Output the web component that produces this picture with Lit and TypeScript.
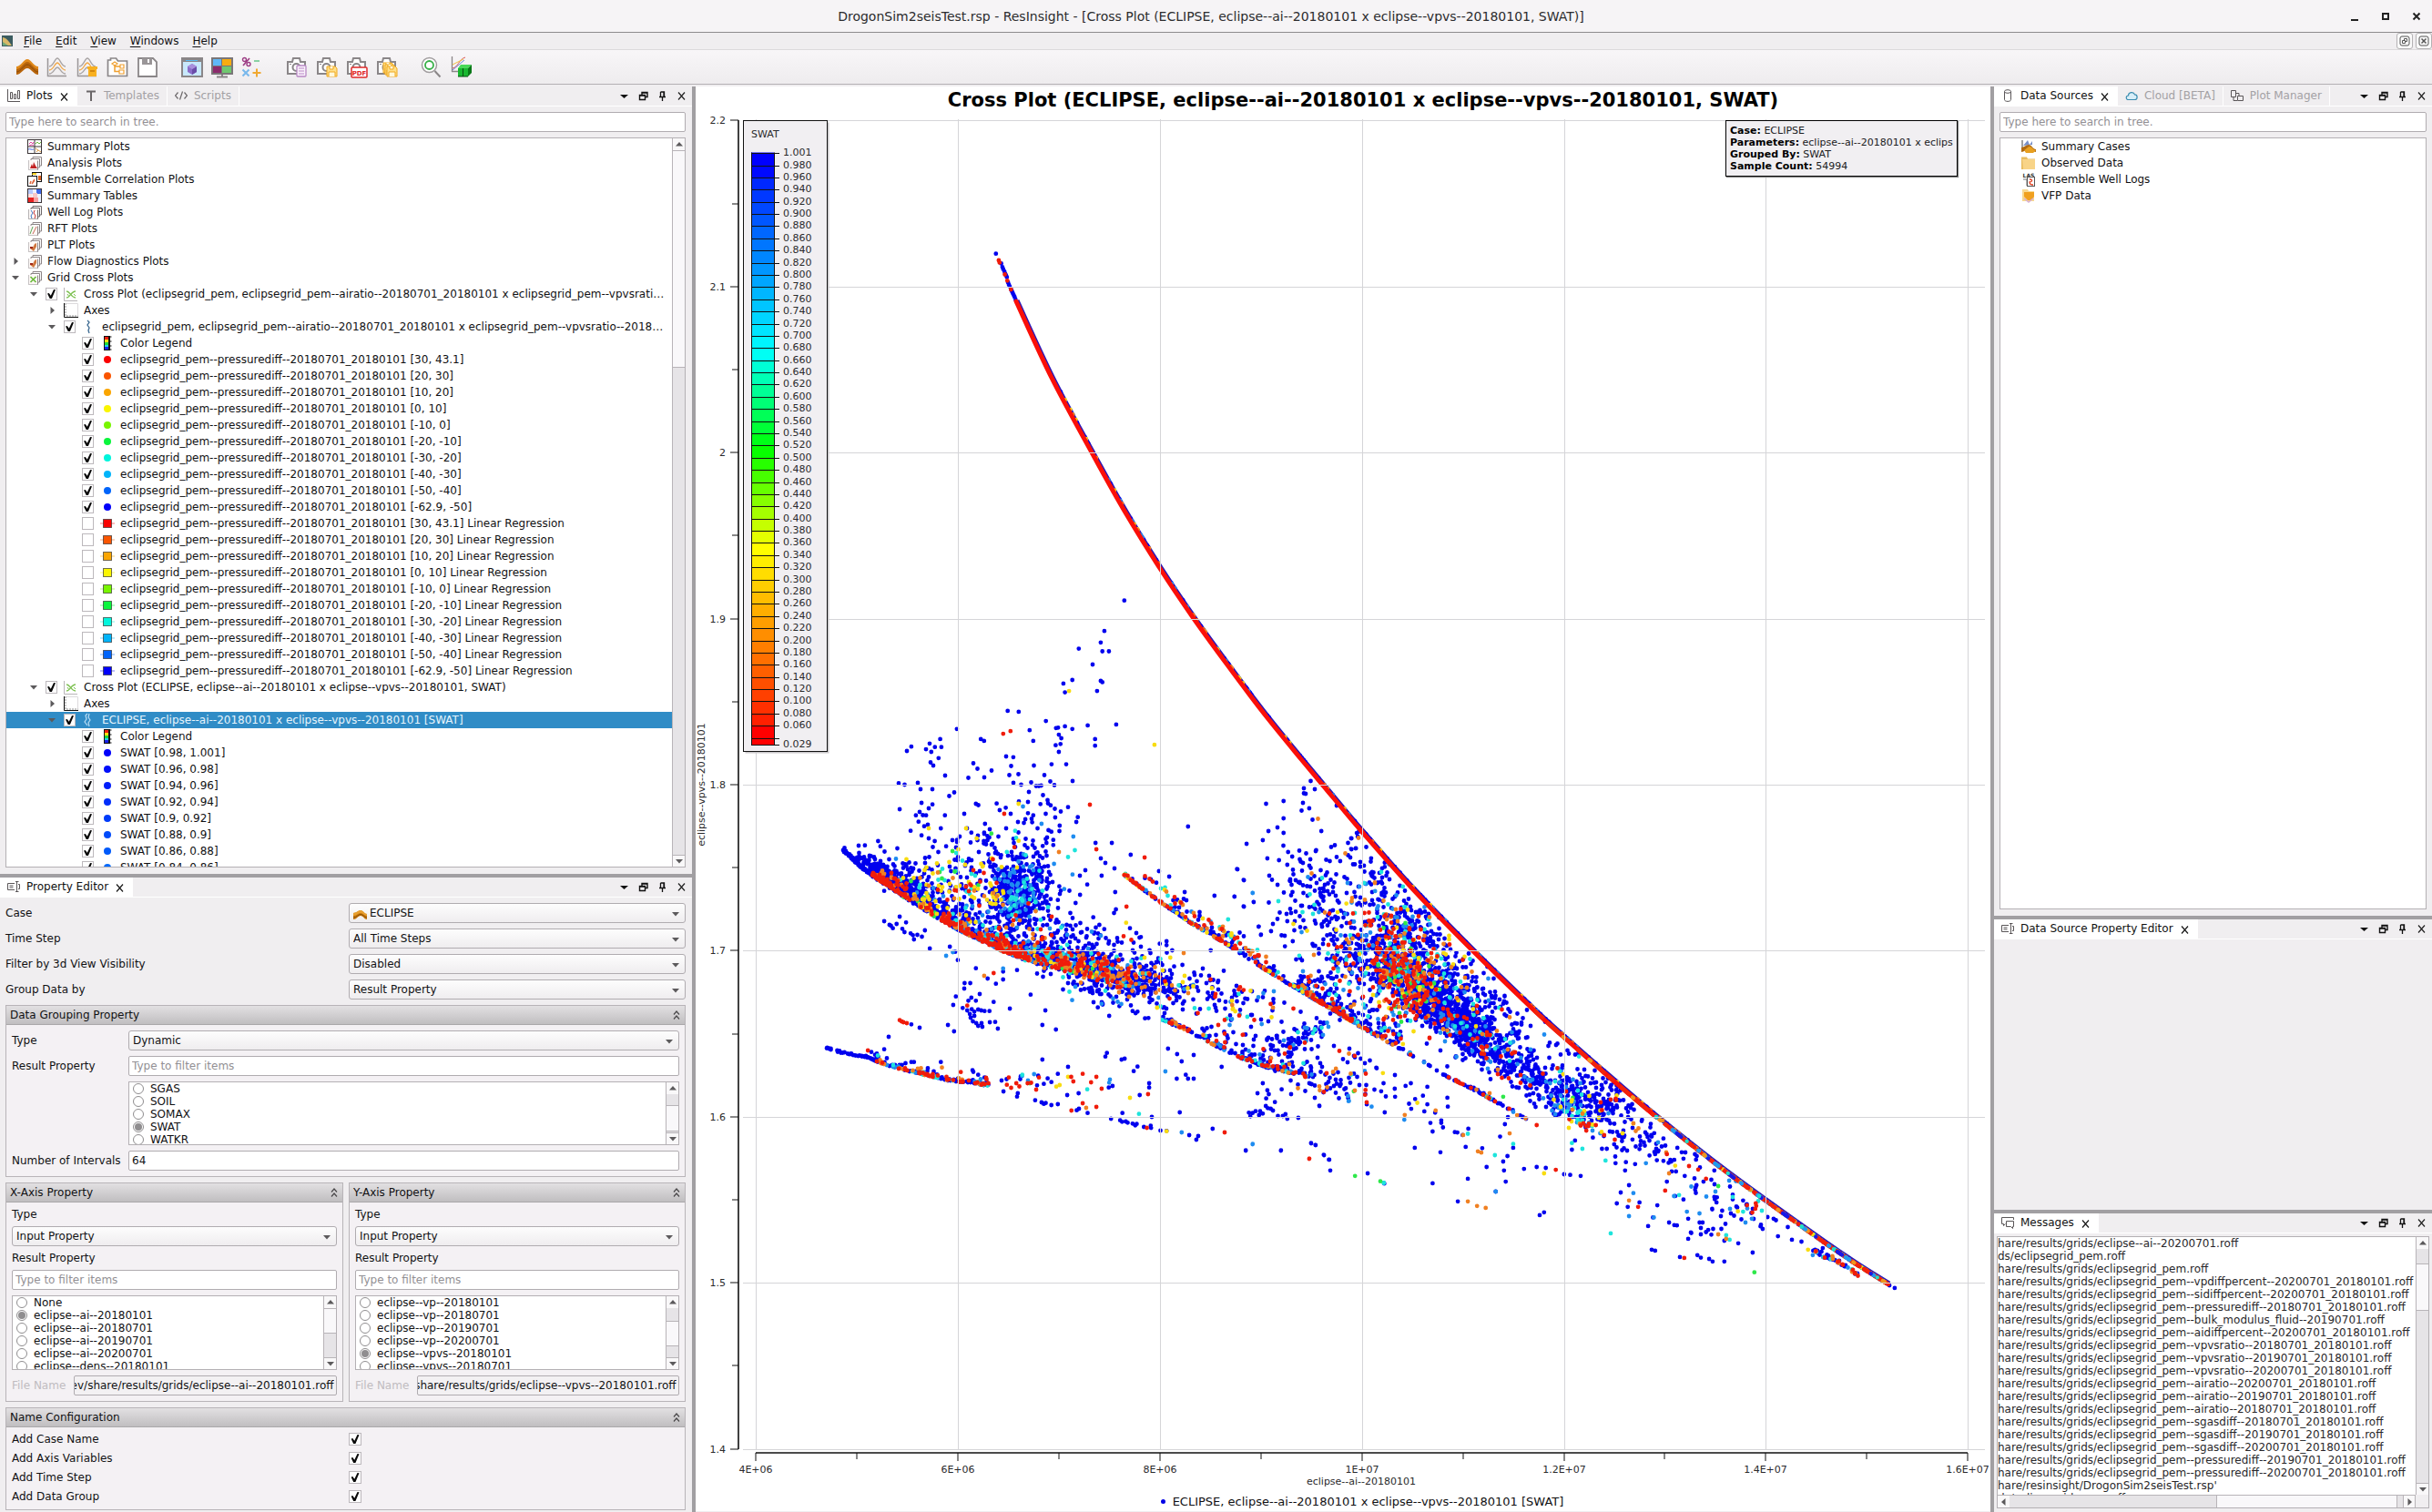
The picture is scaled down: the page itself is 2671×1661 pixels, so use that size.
import { LitElement, html, svg, css, nothing, TemplateResult, SVGTemplateResult } from "lit";
import { customElement } from "lit/decorators.js";

/* ------------------------------------------------------------------ */
/* Colour scale                                                        */
/* ------------------------------------------------------------------ */

const STOPS: number[][] = [
  [255, 0, 0],
  [255, 127, 0],
  [255, 255, 0],
  [0, 255, 0],
  [0, 255, 255],
  [0, 127, 255],
  [0, 0, 255],
];

function rainbow(t: number): string {
  const p = Math.min(Math.max(t, 0), 1) * (STOPS.length - 1);
  const i = Math.min(Math.floor(p), STOPS.length - 2);
  const f = p - i;
  const c = STOPS[i].map((v, k) => Math.round(v + (STOPS[i + 1][k] - v) * f));
  return `rgb(${c.join(",")})`;
}

/* ------------------------------------------------------------------ */
/* Scatter data                                                        */
/* ------------------------------------------------------------------ */

type Key = "b" | "l" | "c" | "g" | "y" | "o" | "r";
type Pt = [number, number];

const POINT_COLORS: Record<Key, string> = {
  b: "#0000ee",
  l: "#1e8cf0",
  c: "#1ee4dc",
  g: "#2ee84a",
  y: "#f8dc10",
  o: "#f08022",
  r: "#f01c0a",
};
const DRAW_ORDER: Key[] = ["b", "l", "c", "g", "y", "o", "r"];

function mulberry(seed: number): () => number {
  let a = seed;
  return () => {
    a = (a + 0x6d2b79f5) | 0;
    let t = Math.imul(a ^ (a >>> 15), 1 | a);
    t = (t + Math.imul(t ^ (t >>> 7), 61 | t)) ^ t;
    return ((t ^ (t >>> 14)) >>> 0) / 4294967296;
  };
}

const MAIN: Pt[] = [
  [1094, 279], [1116, 331], [1155, 415], [1199, 497], [1236, 563], [1275, 626], [1310, 678],
  [1344, 725], [1386, 781], [1429, 834], [1464, 876], [1496, 914], [1551, 976], [1616, 1043],
  [1685, 1110], [1717, 1139], [1766, 1182], [1819, 1227], [1886, 1280], [1939, 1319],
  [2005, 1366], [2039, 1389], [2074, 1411],
];

const SECOND: Pt[] = [
  [1234, 961], [1265, 985], [1306, 1013], [1348, 1038], [1389, 1065], [1430, 1090],
  [1464, 1110], [1497, 1130], [1541, 1154], [1589, 1183], [1618, 1197], [1647, 1213], [1677, 1230],
];

const SECOND_UPPER: Pt[] = [
  [1257, 963], [1285, 983], [1310, 1003], [1333, 1016], [1350, 1027], [1368, 1042], [1386, 1052],
];

const LEFT_EDGE: Pt[] = [
  [925, 934], [949, 956], [974, 973], [1007, 994], [1028, 1008], [1053, 1022], [1082, 1036],
  [1103, 1046], [1132, 1056], [1165, 1065], [1200, 1074], [1240, 1084],
];

const LOWER: Pt[] = [
  [906, 1151], [925, 1157], [954, 1162], [966, 1168], [987, 1174], [1016, 1181], [1041, 1187], [1066, 1190], [1086, 1193],
];

const MIDDLE: Pt[] = [
  [1275, 1120], [1298, 1130], [1331, 1147], [1364, 1163], [1389, 1172], [1410, 1177], [1439, 1185],
];

const TAIL: Pt[] = [[1992, 1374], [2002, 1381], [2015, 1385], [2030, 1394], [2043, 1404]];

/** Hand-placed samples: `o` is the patch origin and `s` the units per pixel. */
interface Patch {
  o: Pt;
  s: Pt;
  pts: Partial<Record<Key, string>>;
}

const PATCHES: Patch[] = [
  {
    o: [750, 80],
    s: [2.24, 2.063],
    pts: {
      b: "770,410 1086,1196 1037,1265 974,1305 1028,1291 1032,1311 1048,1311 1008,1341 936,1384 958,1376 940,1404 1028,1378 1032,1381 1019,1401 799,1446 826,1448 853,1490 862,1514 893,1469 918,1485 923,1484 940,1481 958,1487 996,1479 1066,1477 925,1500 931,1508 929,1521 917,1524 925,1539 1014,1510 1014,1525 674,1487 733,1510 741,1514 551,1537 562,1527 598,1533 607,1520 620,1528 636,1528 633,1510 611,1539 629,1553 813,1551 907,1567 943,1567 616,1570 783,432 786,440 788,445 791,450 793,455 795,459 797,463 800,475 802,480 804,484 808,492 810,496 812,500 814,504 816,508 818,513",
      r: "777,425 779,430 792,457 798,471 807,491 788,1498 806,1492",
      y: "950,1401 1160,1523",
    },
  },
  {
    o: [850, 880],
    s: [2.412, 3],
    pts: {
      b: "333,27 391,6 420,11 386,36 376,47 403,47 453,47 383,68 398,83 362,98 442,90 391,113 426,132 410,123 241,146 276,132 282,149 535,9 504,42 559,75 523,104 557,104 456,149 485,128 485,135 590,8 598,30 614,22 627,42 615,90 673,40 687,47 720,42 733,14 779,20 745,54 757,81 666,60 662,72 684,70 706,10 805,53 801,69 735,101 720,125 740,128 722,138 685,145 712,148 740,145 1097,84 852,138 895,138 945,177 866,189 878,204 902,222 825,228 868,246 830,275 904,300 1020,231 1047,249 983,254 998,258 1013,269 811,309 799,336 752,326 756,281 733,323 906,357 901,369 1088,300 1167,312 1220,315 1245,261 1228,225 1252,141 1295,129 1310,99 1307,189 1350,0 1350,57 1350,105 1418,24 1450,99 1530,123 1530,159 1541,156 1362,168 1338,195 1373,183 1360,210 1393,192 1421,192 1500,198 1334,276 1271,333 1245,348 1393,267 1284,414 1317,429 1290,441 1360,396 846,383 862,408 875,422 960,435 972,448 943,419 292,396 306,408 310,411 315,419 325,405 333,381 340,421 350,400 346,432 362,436 368,442 380,441 392,447 400,426 371,456 413,486 292,296 466,480 480,497 487,524 535,551 644,557 607,562 607,588 588,602 566,585 505,600 520,600 504,618 545,636 482,644 475,672 515,658 523,648 535,658 500,682 512,690 524,686 531,694 541,687 549,690 558,692 571,692 519,702 531,708 521,714 527,726 536,732 541,741 552,744 550,732 572,729 586,728 593,750 582,662 625,684 680,638 719,690 711,738 747,753 461,738 477,759 386,747 364,736 304,777 711,852 779,876 882,830 878,842 929,849 921,852 963,875 953,890 897,939 887,944 807,963 777,969 994,930 994,944 969,969 1067,915 1091,902 1097,915 1112,915 1044,816 1068,834 1080,858 1112,837 1186,876 1075,1026 692,986 709,993 715,998 720,995 735,1002 752,999 802,1019 808,1014 831,1028 923,1028 893,1047 917,1052 922,1057 932,1056 937,1060 950,1063 957,1069 961,1064 980,1074 998,1070 999,1077 1001,1041 1024,1086 1040,1087 1100,1101 1124,1104 1119,1116 1162,1080 1250,1152 1343,1152 1423,1128 1435,1134 1457,1167 1471,1182 1295,930 1281,963 1307,953 1311,966 1304,980 1327,992 1303,1005 1308,1012 1316,1014 1322,1020 1288,1022 1276,1022 1268,1028 1258,1027 1262,1039 1285,1035 1295,1030 1335,1038 1348,1038 1355,1032 1360,1047 1389,1044 1370,966 1345,950 1445,1005 1264,744 442,860 371,860 364,860 292,818 258,827 268,836 272,843 526,887 541,902 608,957 646,963 644,974 558,911 545,926 700,905 725,914 752,899 697,937 715,932 735,926 888,708 858,680 950,692 958,699 963,694 983,716 992,715 915,676 1022,470 1040,462 1040,475 1157,492 1055,492 1018,518 1060,545 1082,540",
      r: "837,12 610,42 854,159 982,186 928,244 934,348 637,152 249,822 582,567 788,1020 854,1008 818,996 868,948 840,927 854,909 991,966 988,1077 1194,1092 1418,1179 495,893 333,722 338,726 343,729 352,732 512,674 622,911 617,935 642,930 672,930 702,911 818,899 793,924 1243,770 1195,795",
      o: "755,168 557,576 827,1011 445,878 1214,672 1322,681",
      y: "410,90 648,9 537,123 648,131 779,909 943,978 757,936 748,941 1015,681 1216,683 1222,693 1050,516 1040,1088 933,401",
      g: "576,107 473,165 678,930",
      c: "483,171 639,98 617,168 658,902 830,950 967,1031 1203,390 973,518 1152,684 1254,711",
      l: "709,75 793,117 791,242 742,207 769,290 456,510 474,498 1268,303 607,552 890,918 888,928 1037,891 1080,1092 1268,1131 790,656 868,668 689,900 1292,735 1234,703",
    },
  },
  {
    o: [1350, 880],
    s: [2.0907, 2.851],
    pts: {
      b: "280,117 280,150 291,148 326,179 357,193 357,206 345,225 349,253 313,259 351,211 293,100 295,111 68,393 96,407 146,439 128,455 73,418 12,299 33,330 56,316 18,213 33,247 38,1094 119,1094 188,1071 198,1077 217,1108 229,1123 232,1157 318,1166 356,1198 207,954 273,930 316,950 380,901 405,892 349,909 381,926 445,923 455,895 501,929 502,957 427,933 413,948 418,964 455,950 473,976 357,975 448,972 462,1008 487,1000 487,1008 491,1022 467,1035 518,1037 524,1038 549,1026 536,1046 426,1086 485,1100 543,1083 581,1087 548,1183 467,1197 525,1254 591,1146 629,1129 639,1112 652,1086 631,1157 635,1192 622,1051 633,1012 640,990 677,1152 706,1146 727,1149 769,1169 783,1171 807,1174 713,1297 723,1288 612,1223 887,1134 911,1131 909,1157 932,1137 918,1203 899,1226 890,1260 915,1271 942,1257 983,1266 973,1304 962,1331 1010,1320 1022,1328 1028,1329 1054,1308 1054,1371 1060,1351 1080,1320 1087,1320 1083,1337 1083,1357 1095,1350 1100,1343 1107,1358 1130,1340 970,1405 978,1408 1035,1428 1075,1422 1083,1430 1102,1434 1110,1442 1137,1442 1202,1414 1169,1385 1137,1377 1260,1363 1292,1374 1314,1380 1250,1308 1236,1303 1221,1327 1225,1340 1220,1332 1180,1251 1114,1240 1120,1241 1115,1247 1119,1257 1109,1277 1132,1283 1129,1300 1114,1157 1089,1192 1073,1203 1071,1210 1070,1217 1046,1174 1043,1248 1024,1237 1005,1192 1341,1408 1363,1400 1360,1411 1528,1525 1516,1517 1508,1508 1500,1502 787,1092 835,1054 856,1089 867,1089 794,1063 884,1075 902,1065 905,1032 926,1060 942,1090 948,998 916,990 968,1011 997,1057 976,1040 1039,1100 1029,1086 978,1106 965,1110 982,1125 997,1127 1013,1124 1009,1133 1022,1124 1043,1120 1016,1160 1026,1160 1072,1123",
      r: "184,1120 706,1015 750,1155 939,1271 1001,1220 1005,1106 1077,1154 1095,1183 1045,1431 1189,1266 1209,1260 1210,1268 1208,1277 856,968 861,1046 819,1018 842,1015 820,1032 313,905 312,920 31,732 22,590 33,592 23,672 288,798",
      o: "571,1097 579,1101 548,1254 569,1268 589,1274 644,1041 537,1046 403,983 208,906 245,838 1010,1166 918,1251 1123,1357 1141,1371 474,969 598,915 661,984 928,1009",
      y: "353,852 399,761 8,652 432,945 723,1166 1024,1142 1168,1285 1329,1405 767,856 269,321 249,348 928,1010",
      g: "289,1174 286,909 347,1191 789,929 629,926 1206,1476 1123,1206",
      c: "355,1196 610,1109 652,1074 811,1089 864,1126 787,1071 876,1354 1149,1374 1141,1360 1033,1234 1180,1286 1223,1283 399,268 161,484 350,719 548,1042 803,800",
      l: "54,288 54,1074 274,940 311,845 402,998 355,1196 612,1223 928,1228 918,1300 975,1304 1051,1286 1148,1189 957,1134 1200,1308 1340,1422 335,282 299,268 327,957",
    },
  },
];

function buildPoints(): Record<Key, Pt[]> {
  const rnd = mulberry(20180101);
  const out: Record<Key, Pt[]> = { b: [], l: [], c: [], g: [], y: [], o: [], r: [] };
  const gauss = () => (rnd() + rnd() + rnd() + rnd() - 2) * 1.7;
  const along = (line: Pt[], t: number): Pt => {
    const p = t * (line.length - 1);
    const i = Math.min(Math.floor(p), line.length - 2);
    const f = p - i;
    return [line[i][0] + (line[i + 1][0] - line[i][0]) * f, line[i][1] + (line[i + 1][1] - line[i][1]) * f];
  };
  const limit = (y: number): number => {
    for (let i = 1; i < MAIN.length; i++) {
      if (y <= MAIN[i][1]) {
        const [x0, y0] = MAIN[i - 1];
        const [x1, y1] = MAIN[i];
        return x0 + ((x1 - x0) * (y - y0)) / (y1 - y0);
      }
    }
    return 2080;
  };
  // Lower edge of the left wedge; nothing lies between it and the lower trend.
  const floor = (x: number): number => {
    if (x < LEFT_EDGE[0][0]) return 930;
    for (let i = 1; i < 9; i++) {
      if (x <= LEFT_EDGE[i][0]) {
        const [x0, y0] = LEFT_EDGE[i - 1];
        const [x1, y1] = LEFT_EDGE[i];
        return y0 + ((y1 - y0) * (x - x0)) / (x1 - x0);
      }
    }
    return 2000;
  };
  const pick = (mix: string): Key => mix[Math.floor(rnd() * mix.length)] as Key;
  const add = (k: Key, x: number, y: number) => {
    if (x < limit(y) && !(y < 1070 && y > floor(x) + 1)) out[k].push([Math.round(x * 2) / 2, Math.round(y * 2) / 2]);
  };
  const trail = (line: Pt[], n: number, up: number, mix: string, t0 = 0, t1 = 1) => {
    for (let i = 0; i < n; i++) {
      const [x, y] = along(line, t0 + (t1 - t0) * rnd());
      const lift = -Math.log(1 - rnd() * 0.98) * up;
      add(pick(mix), x + lift * 0.5, y - lift);
    }
  };
  const blob = (cx: number, cy: number, sx: number, sy: number, slope: number, n: number, mix: string) => {
    for (let i = 0; i < n; i++) {
      const dx = gauss() * sx;
      add(pick(mix), cx + dx, cy + dx * slope + gauss() * sy);
    }
  };

  const B = "bbbbbbbbbb";

  // Left wedge
  trail(LEFT_EDGE, 90, 1, B, 0, 0.12);
  trail(LEFT_EDGE, 330, 5, B, 0.1, 0.5);
  trail(LEFT_EDGE, 420, 7, B + "lc", 0.4, 1);
  trail(LEFT_EDGE, 70, 2, "rrrro", 0.12, 0.24);
  trail(LEFT_EDGE, 40, 4, "yyorg", 0.24, 0.36);
  trail(LEFT_EDGE, 210, 4, "rrrrroolc", 0.38, 0.72);
  trail(LEFT_EDGE, 90, 6, "rrolcgy", 0.6, 0.95);
  blob(972, 961, 13, 6, 0.6, 190, B + B);
  blob(982, 966, 10, 4, 0.6, 18, "rrrro");
  blob(1000, 965, 20, 12, 0.3, 80, B);
  blob(1022, 965, 18, 12, 0.2, 26, "yyygoc");
  blob(1035, 990, 24, 14, 0.3, 90, B + "ly");
  blob(1078, 950, 24, 22, 0, 100, B + "bbbyygcr");
  blob(1058, 978, 14, 14, 0, 28, "bbycro");
  // Blue knot
  blob(1120, 980, 15, 20, 0, 330, B + B + "lllc");
  blob(1114, 985, 8, 18, 0, 28, "llcl");
  blob(1095, 985, 6, 6, 0, 24, "yyyob");
  blob(1130, 958, 22, 20, 0, 60, B + "c");
  blob(1110, 1010, 26, 12, 0.2, 60, B + "rlo");
  blob(1135, 905, 18, 32, 0, 26, B + "l");
  blob(1032, 868, 34, 20, 0, 16, B);
  blob(1124, 855, 26, 12, 0, 18, B);
  // Band running right from the wedge
  blob(1150, 1050, 24, 8, 0.25, 120, B + "rrolc");
  blob(1195, 1062, 26, 9, 0.3, 180, B + "rroolc");
  blob(1218, 1068, 18, 8, 0.4, 60, "rrroolcb");
  blob(1250, 1080, 28, 9, 0.2, 140, B + "ool");
  blob(1200, 1088, 24, 7, 0.3, 44, B + "lc");
  blob(1180, 1025, 26, 10, 0.3, 62, B + "lc");
  blob(1240, 1058, 40, 14, 0.2, 80, B + "rocy");
  blob(1310, 1085, 42, 14, 0.2, 90, B + "rrlcoy");
  blob(1345, 1105, 45, 14, 0.1, 50, B + "lcr");
  // Second diagonal
  trail(SECOND, 220, 0.6, "bbbbbrrrolcy", 0, 0.55);
  trail(SECOND, 110, 0.5, "bbbbbbbbrlcor", 0.5, 1);
  trail(SECOND_UPPER, 42, 0.8, "rrlcobcy");
  trail(SECOND, 80, 8, B + "lcro", 0.1, 0.45);
  trail(SECOND, 210, 9, B + "rrolc", 0.4, 0.66);
  // Middle diagonal
  trail(MIDDLE, 130, 1.5, "bbbbbbrrolc");
  trail(MIDDLE, 70, 8, B + "rrlc", 0.25, 1);
  blob(1438, 1134, 16, 8, -0.4, 50, B + "lc");
  blob(1405, 1150, 22, 10, 0, 40, B + "lro");
  blob(1455, 1188, 24, 10, 0.2, 52, B + "llroo");
  blob(1465, 1168, 36, 14, 0.2, 34, B + "ocr");
  // Lower line
  trail(LOWER, 50, 0.6, B, 0, 0.35);
  trail(LOWER, 120, 1, "bbbbrrroolc", 0.34, 1);
  trail(LOWER, 30, 6, B + "rco", 0.3, 1);
  blob(1110, 1188, 24, 5, 0, 14, "brrbl");
  // Sparse cloud left of the main trend
  blob(1445, 978, 26, 22, 0, 75, B + B + "lc");
  blob(1450, 1010, 26, 24, 0, 55, B + B + "lcy");
  blob(1440, 870, 22, 14, 0, 12, B);
  blob(1500, 990, 45, 32, 0.9, 60, B + "lo");
  blob(1535, 1000, 30, 18, 1, 80, B + B + "lrco");
  // Central cluster
  blob(1480, 1050, 18, 16, 0, 100, B + "llrroc");
  blob(1530, 1030, 28, 22, 0.2, 200, B + "rrlcoy");
  blob(1545, 1072, 32, 20, 0.3, 400, B + B + "rrroolcgy");
  blob(1540, 1072, 18, 26, 0.6, 210, "rrrroolcbbyg");
  blob(1570, 1100, 26, 14, 0.8, 300, B + B + "lrr");
  blob(1602, 1118, 26, 13, 0.7, 370, B + B + B + "lrc");
  blob(1630, 1146, 26, 14, 0.6, 170, B + B + "rolc");
  blob(1600, 1075, 36, 24, 0.9, 190, B + B + "lcroy");
  blob(1660, 1130, 36, 22, 0.9, 80, B + B + "cl");
  blob(1655, 1165, 30, 14, 0.4, 70, B + "lr");
  blob(1700, 1195, 26, 13, 0.6, 90, B + "llrc");
  blob(1730, 1206, 24, 14, 0.3, 150, B + B + "cly");
  blob(1732, 1228, 13, 6, 0.5, 44, "cllcroyb");
  blob(1770, 1215, 12, 22, 0.5, 46, B + "r");
  blob(1748, 1180, 22, 14, 0.8, 26, B);
  blob(1790, 1245, 20, 12, 0.6, 34, B + "rlo");
  blob(1850, 1270, 34, 14, 0.6, 26, B + "rcl");
  blob(1880, 1330, 40, 16, 0.3, 12, B + "lc");
  blob(1915, 1328, 16, 7, 0.4, 16, "bblcr");
  trail(TAIL, 56, 1, "bbbbbrrocl");
  // Main trend: blue rim, warm core, mixed tail
  for (let i = 0; i < 420; i++) {
    const [x, y] = along(MAIN, 0.78 + 0.22 * rnd());
    out[pick("bbbbllcrroy")].push([x, y]);
  }
  for (let i = 0; i < 160; i++) {
    const [x, y] = along(MAIN, 0.1 + 0.7 * rnd());
    out[pick("bbbbloy")].push([x + 1, y - 1]);
  }

  for (const patch of PATCHES) {
    for (const k of DRAW_ORDER) {
      for (const pair of (patch.pts[k] ?? "").split(" ").filter(Boolean)) {
        const [px, py] = pair.split(",").map(Number);
        out[k].push([patch.o[0] + px / patch.s[0], patch.o[1] + py / patch.s[1]]);
      }
    }
  }
  return out;
}

const toPath = (pts: Pt[]): string => pts.map(([x, y]) => `M${x.toFixed(1)} ${y.toFixed(1)}h0`).join("");

/** Catmull-Rom spline through the given points. */
function toCurve(p: Pt[]): string {
  let d = `M${p[0].join(" ")}`;
  for (let i = 0; i < p.length - 1; i++) {
    const a = p[Math.max(i - 1, 0)];
    const b = p[i];
    const c = p[i + 1];
    const e = p[Math.min(i + 2, p.length - 1)];
    const q = [b[0] + (c[0] - a[0]) / 6, b[1] + (c[1] - a[1]) / 6, c[0] - (e[0] - b[0]) / 6, c[1] - (e[1] - b[1]) / 6];
    d += `C${q.map((n) => n.toFixed(1)).join(" ")} ${c.join(" ")}`;
  }
  return d;
}

@customElement("cross-plot")
export class CrossPlot extends LitElement {
  static styles = css`
    :host {
      display: flex;
      flex-direction: column;
      position: relative;
      min-width: 0;
      min-height: 0;
      background: #fff;
      color: #202022;
      font: 11px/13px "DejaVu Sans", sans-serif;
    }
    .title {
      margin: 0;
      padding: 0 0 0 44px;
      font-size: 21px;
      line-height: 30px;
      font-weight: bold;
      text-align: center;
      color: #000;
      white-space: nowrap;
      flex: none;
    }
    .canvas {
      display: block;
      width: 100%;
      flex: 1;
      min-height: 0;
    }
    .caption {
      display: flex;
      align-items: center;
      justify-content: center;
      gap: 8px;
      flex: none;
      height: 22px;
      padding-left: 42px;
      font-size: 13px;
      color: #101012;
    }
    .dot {
      width: 5px;
      height: 5px;
      border-radius: 50%;
      background: #0000e6;
    }
    .info {
      position: absolute;
      top: 37px;
      right: 36px;
      box-sizing: border-box;
      width: 255px;
      padding: 4px;
      border: 1px solid #000;
      background: #f1eff2;
      white-space: nowrap;
      box-shadow: 1px 1px 1px #888;
    }
    .info p {
      margin: 0;
      overflow: hidden;
    }
    .info b {
      color: #000;
    }
    .tick {
      font-size: 11px;
      fill: #2a2a2c;
    }
  `;

  private points = buildPoints();

  private x(v: number): number {
    return 830.3 + (v - 4e6) * 1.109e-4;
  }

  private y(v: number): number {
    return 132.4 + (2.2 - v) * 1824;
  }

  private axes(): SVGTemplateResult {
    const ys = [2.2, 2.1, 2, 1.9, 1.8, 1.7, 1.6, 1.5, 1.4];
    const xs: [number, string][] = [
      [4e6, "4E+06"], [6e6, "6E+06"], [8e6, "8E+06"], [1e7, "1E+07"],
      [1.2e7, "1.2E+07"], [1.4e7, "1.4E+07"], [1.6e7, "1.6E+07"],
    ];
    const r = Math.round;
    return svg`
      <path d="M811 132V1592M830 1596H2161" stroke="#111" stroke-width="1.6" fill="none"></path>
      ${ys.map((v) => svg`
        <path d="M802 ${r(this.y(v))}h9" stroke="#111" stroke-width="1"></path>
        ${v > 1.4 ? svg`<path d="M804 ${r(this.y(v - 0.05))}h7" stroke="#111"></path>` : nothing}
        <text class="tick" x="797" y=${r(this.y(v)) + 4} text-anchor="end">${v}</text>`)}
      ${xs.map(([v, label]) => svg`
        <path d="M${r(this.x(v))} 1596v9" stroke="#111"></path>
        ${v < 1.6e7 ? svg`<path d="M${r(this.x(v + 1e6))} 1596v7" stroke="#111"></path>` : nothing}
        <text class="tick" x=${r(this.x(v))} y="1618" text-anchor="middle">${label}</text>`)}
      <text class="tick" x="1495" y="1631" text-anchor="middle">eclipse--ai--20180101</text>
      <text class="tick" transform="translate(774 862) rotate(-90)" text-anchor="middle">eclipse--vpvs--20180101</text>`;
  }

  private grid(): SVGTemplateResult {
    const r = Math.round;
    const h = [2.2, 2.1, 2, 1.9, 1.8, 1.7, 1.6, 1.5, 1.4].map((v) => `M816 ${r(this.y(v))}.5H2180`).join("");
    const v = [4, 6, 8, 10, 12, 14, 16].map((n) => `M${r(this.x(n * 1e6))}.5 131V1592`).join("");
    return svg`<path d=${h + v} stroke="#d5d5d8" stroke-width="1" fill="none"></path>`;
  }

  private legend(): SVGTemplateResult {
    const lo = 0.029;
    const hi = 1.001;
    const pos = (v: number) => 167.5 + ((hi - v) / (hi - lo)) * 650.5;
    const levels: number[] = [hi];
    for (let i = 49; i >= 2; i--) levels.push(i / 50);
    levels.push(lo);
    return svg`
      <rect x="818.5" y="134.5" width="92" height="693" fill="#c9c7ca"></rect>
      <rect x="816.5" y="132.5" width="92" height="693" fill="#f1eff2" stroke="#111"></rect>
      <text class="tick" x="825" y="151">SWAT</text>
      ${levels.slice(1).map((v, i) => {
        const top = pos(levels[i]);
        return svg`<rect x="825" y=${top.toFixed(1)} width="25" height=${(pos(v) - top + 0.4).toFixed(1)}
          fill=${rainbow(((v + levels[i]) / 2 - lo) / (hi - lo) + (i < 2 ? 0.02 : 0) - (i > 46 ? 0.03 : 0))}></rect>`;
      })}
      <path d=${"M825.5 167.5V818M850.5 167.5V818" + levels.map((v) => `M825 ${Math.round(pos(v))}.5H856`).join("")}
        stroke="#111" fill="none"></path>
      ${levels.filter((v) => v !== 0.04).map((v) => svg`
        <text class="tick" x="860" y=${Math.round(pos(v)) + 3}>${v.toFixed(3)}</text>`)}`;
  }

  render() {
    return html`
      <h1 class="title">Cross Plot (ECLIPSE, eclipse--ai--20180101 x eclipse--vpvs--20180101, SWAT)</h1>
      <svg class="canvas" viewBox="764 125 1422 1513" role="img" aria-label="Cross plot">
        <path d=${toCurve(MAIN.slice(1))} transform="translate(1 -1)" stroke="#2818b8" stroke-width="5" fill="none"></path>
        ${DRAW_ORDER.map((k) => svg`
          <path d=${toPath(this.points[k])} stroke=${POINT_COLORS[k]} stroke-width="4.8" stroke-linecap="round" fill="none"></path>`)}
        <path d=${toCurve(MAIN.slice(1, 18))} stroke="#fb0f08" stroke-width="5" fill="none" stroke-linecap="round"></path>
        <path d=${toCurve(MAIN.slice(14))} stroke="#f2230c" stroke-width="4.6" fill="none" stroke-dasharray="14 5 22 4 9 9"></path>
        <path d=${toCurve(MAIN.slice(15))} stroke="#f0961e" stroke-width="4.4" fill="none" stroke-linecap="round" stroke-dasharray="1 37 2 61"></path>
        <path d=${toCurve(MAIN.slice(17))} stroke="#1e9cf0" stroke-width="4.4" fill="none" stroke-linecap="round" stroke-dasharray="1 22 5 31"></path>
        <path d=${toCurve(MAIN.slice(17))} stroke="#1818e8" stroke-width="4.4" fill="none" stroke-linecap="round" stroke-dasharray="0 29 6 38"></path>
        <path d=${toCurve(MAIN.slice(17))} stroke="#1ee0c8" stroke-width="4.4" fill="none" stroke-linecap="round" stroke-dasharray="0 43 0 57"></path>
        ${this.grid()} ${this.axes()} ${this.legend()}
      </svg>
      <div class="caption"><span class="dot"></span>ECLIPSE, eclipse--ai--20180101 x eclipse--vpvs--20180101 [SWAT]</div>
      <aside class="info">
        <p><b>Case:</b> ECLIPSE</p>
        <p><b>Parameters:</b> eclipse--ai--20180101 x eclips</p>
        <p><b>Grouped By:</b> SWAT</p>
        <p><b>Sample Count:</b> 54994</p>
      </aside>
    `;
  }
}

/* ------------------------------------------------------------------ */
/* Icons                                                               */
/* ------------------------------------------------------------------ */

const icon = (size: number, body: SVGTemplateResult): TemplateResult =>
  html`<svg class="icon" width=${size} height=${size} viewBox="0 0 ${size} ${size}" fill="none" aria-hidden="true">${body}</svg>`;

const camera = svg`<path d="M2 6H7L8 2H15L16 6H21V19H2Z" stroke="#8a8688" stroke-width="2" fill="#fff"></path>
  <circle cx="11.5" cy="12" r="4" stroke="#8a8688" stroke-width="2"></circle><path d="M4 8.5h2" stroke="#8a8688"></path>`;

const peaks = svg`<path d="M1.5 2V21.5H22" stroke="#9a9698" stroke-width="1.5"></path>
  <path d="M3 11C8 11 9 2 12 2S16 11 21 11" stroke="#a8a4a4" stroke-width="1.3"></path>
  <path d="M3 15C8 15 9 7 12 7S16 15 21 15" stroke="#f0a848" stroke-width="1.3"></path>
  <path d="M3 19C8 19 9 12 12 12S16 19 21 19" stroke="#a8a4a4" stroke-width="1.3"></path>`;

const floppy = (x: number, y: number) => svg`<path d="M${x} ${y}h9l2 2v9h-11z" fill="#ffe08a" stroke="#f0a81e"></path>
  <path d="M${x + 3} ${y}v3h4v-3M${x + 2} ${y + 11}v-5h7v5" stroke="#f0a81e" fill="#fff8dc"></path>`;

const TOOLS: Record<string, SVGTemplateResult> = {
  "Import Eclipse Case": svg`<path d="M0 13C5 13 8 4 12 4S19 13 24 13V20C19 20 16 13 12 13S5 20 0 20Z" fill="#b8650c"></path>
    <path d="M0 11C5 11 8 3 12 3S19 11 24 11V14C19 14 16 6 12 6S5 14 0 14Z" fill="#e08a1c"></path>
    <path d="M0 17C5 17 8 9 12 9S19 17 24 17" stroke="#8a4a08" stroke-width="1"></path>`,
  "Import Summary Case": peaks,
  "Import Ensemble": svg`${peaks}<path d="M12 11h11v3h-1v8h-9v-8h-1z" fill="#f8b020"></path><path d="M15 16h5" stroke="#c87808" stroke-width="1.5"></path>`,
  "Open Project": svg`<path d="M1.500 21.500V4h3V2h6l2 3h10v16.500z" stroke="#8a8688" stroke-width="1.700" fill="#fff"></path>
    <path d="M9 8v8.500h6M9 11h6" stroke="#f0a030" stroke-width="1.500"></path>
    <path d="M6 8l3-2 3 2-3 2zM15 9h4v4h-4zM14 15h5v4h-5z" stroke="#f0a030" stroke-width="1.200" fill="#fff"></path>`,
  "Save Project": svg`<path d="M2 2H18L22 6V22H2Z" stroke="#8a8688" stroke-width="1.800" fill="#fff"></path>
    <path d="M6 2v7h11V2z" fill="#9a9698"></path><path d="M13 3v4" stroke="#fff" stroke-width="2"></path>`,
  "3D Window": svg`<rect x="1" y="2" width="22" height="20" fill="#c8e8fc" stroke="#8a8688" stroke-width="2"></rect>
    <path d="M1 4.500h22" stroke="#8a8688" stroke-width="3"></path><path d="M5 4.500h13" stroke="#58b8f0" stroke-width="1"></path>
    <path d="M12 8l5 3v6l-5 3-5-3v-6z" fill="#8a6cc8"></path><path d="M12 14l5-3v6l-5 3z" fill="#6a4ca8"></path><path d="M12 8l5 3-5 3-5-3z" fill="#a890dc"></path>`,
  "Plot Window": svg`<rect x="0" y="1" width="24" height="19" fill="#7a7678"></rect><rect x="2" y="3" width="9" height="7" fill="#60b8f8"></rect>
    <rect x="12" y="3" width="10" height="7" fill="#f8ac10"></rect><rect x="2" y="11" width="9" height="7" fill="#8c2a6c"></rect>
    <rect x="12" y="11" width="10" height="7" fill="#70c870"></rect><path d="M12 20v2M6 22.500h12" stroke="#8a8688" stroke-width="2"></path>`,
  "Calculator": svg`<path d="M2 10L9 2" stroke="#9c3c84" stroke-width="1.600"></path><circle cx="3.500" cy="3.500" r="2" stroke="#9c3c84" stroke-width="1.400"></circle>
    <circle cx="8" cy="8.500" r="2" stroke="#9c3c84" stroke-width="1.400"></circle><path d="M14 5h6" stroke="#70c890" stroke-width="1.600"></path>
    <path d="M1.500 14.500l7 7M8.500 14.500l-7 7" stroke="#78b8ec" stroke-width="2"></path><path d="M17 13.500v9M12.500 18h9" stroke="#f0a830" stroke-width="2"></path>`,
  "Snapshot to Clipboard": svg`${camera}<rect x="12" y="10" width="10" height="12" rx="1" fill="#faf2fc" stroke="#b888c4" stroke-width="1.300"></rect><path d="M14 13h6M14 16h6M14 19h6" stroke="#b888c4"></path>`,
  "Snapshot to File": svg`${camera}${floppy(12, 11)}`,
  "Snapshot to PDF": svg`${camera}<rect x="6" y="12" width="17" height="11" rx="1" fill="#fff" stroke="#e02828" stroke-width="1.500"></rect>
    <text x="14.500" y="20.500" font-family="DejaVu Sans" font-size="7" font-weight="bold" text-anchor="middle" fill="#e02828">PDF</text>`,
  "Snapshot All": svg`${camera}${floppy(8, 7)}${floppy(10, 9)}${floppy(12, 11)}`,
  "Zoom All": svg`<circle cx="9.500" cy="9.500" r="8" stroke="#a09c9e" stroke-width="1.500" fill="#fff"></circle>
    <circle cx="9.500" cy="9.500" r="4.500" stroke="#38b048" stroke-width="1.800"></circle><path d="M15.500 16l6 6.500" stroke="#8a8688" stroke-width="2"></path>`,
  "Cross Plot": svg`<path d="M1.500 0V17M1 16.500h12" stroke="#8a8688" stroke-width="1.300"></path>
    <path d="M2 13C8 12 9 3 16 1" stroke="#d85858"></path><path d="M2 9L14 3" stroke="#f0c040"></path><path d="M2 15L15 4" stroke="#6888d8"></path>
    <path d="M8 13h11v9H8z" fill="#18b830"></path><path d="M8 13l3-4h12l-4 4z" fill="#48d858"></path><path d="M19 13l4-4v9l-4 4z" fill="#0a7818"></path><path d="M13.500 13v9M8 22h11" stroke="#064a10"></path>`,
};

const TOOL_GROUPS: string[][] = [
  ["Import Eclipse Case", "Import Summary Case", "Import Ensemble", "Open Project", "Save Project"],
  ["3D Window", "Plot Window", "Calculator"],
  ["Snapshot to Clipboard", "Snapshot to File", "Snapshot to PDF", "Snapshot All"],
  ["Zoom All", "Cross Plot"],
];

const stack = (inner: SVGTemplateResult, ink = "#8c8486") => svg`
  <path d="M6 3V1.500H15.500V11H14M4 5V3.500H13.500V13H12" stroke=${ink}></path>
  <path d="M1.500 5.500V15.500H12" stroke=${ink} stroke-dasharray="1 1"></path>
  <rect x="2" y="5" width="10" height="10" fill="#fdf8f6"></rect><path d="M11.500 5.500v10" stroke=${ink}></path>${inner}`;

const TREE_ICONS: Record<string, SVGTemplateResult> = {
  summary: svg`<rect x="0.500" y="0.500" width="15" height="15" fill="#fff" stroke="#3a3436"></rect><path d="M8 1v14M1 8h14" stroke="#3a3436"></path>
    <path d="M2 5l2-2 2 2 1-2M2 7l3-1 2 1" stroke="#e048a0"></path><path d="M9 5l2-2 2 2 2-2" stroke="#70c040"></path>
    <path d="M1 11c2-1 4 1 6 0" stroke="#4868e0"></path><path d="M9 10l3 2 3 2M10 14l2-2" stroke="#e0a048"></path>`,
  analysis: stack(svg`<path d="M3 14l2-5 1 3 1-5 2 4 2 3z" fill="#c02020"></path>`),
  correlation: svg`<rect x="5.500" y="0.500" width="10" height="10" fill="#fff" stroke="#111"></rect><path d="M5 3h5v-2h-4z" fill="#f8d020"></path>
    <path d="M12 4h3v5h-3z" fill="#e06020"></path><rect x="0.500" y="4.500" width="10" height="11" fill="#fff" stroke="#111"></rect>
    <path d="M3 13l1-3M6 11l2-3M5 13l3-4" stroke="#e06840" stroke-width="1.500"></path>`,
  table: svg`<rect x="0.500" y="0.500" width="15" height="15" fill="#eef2ff" stroke="#3a3436"></rect><path d="M1 1h5v5H1z" fill="#b8c8fc"></path><path d="M10 1h5v5h-5z" fill="#4068e8"></path>
    <path d="M6 5h5v5H6z" fill="#f8c8c8"></path><path d="M1 10h6v5H1z" fill="#e82020"></path><path d="M1 6h4v4H1z" fill="#fce0e0"></path><path d="M7 10h5v5H7z" fill="#f8a0a0"></path>`,
  well: stack(svg`<path d="M4 6l2 3-2 3 1 3" stroke="#4078c8"></path><path d="M8 6l-1 3 2 3-1 3" stroke="#c83838"></path>`, "#6c6668"),
  rft: stack(svg`<path d="M3 14l3-8" stroke="#58a858"></path><path d="M6 14l4-8" stroke="#c86858"></path>`),
  plt: stack(svg`<path d="M3 12l3-1 2-4 2-1v4l-3 5z" fill="#d07840"></path><path d="M3 10h3v2H3z" fill="#a02818"></path>`),
  cross: stack(svg`<path d="M3.500 7l6 6M9.500 7l-6 6" stroke="#68b838" stroke-width="1.600"></path>`),
  crossOne: svg`<path d="M0.500 1V15.500H15" stroke="#b8b4b8"></path><path d="M3 12C7 12 8 5 13 5M3 5C7 5 8 12 13 12" stroke="#7cc050" stroke-width="1.300"></path><path d="M4 8l2 3M11 8l2 2" stroke="#7cc050"></path>`,
  axes: svg`<path d="M0.500 0V15.500H16" stroke="#111"></path><path d="M2 0.500V14H16" stroke="#222" stroke-dasharray="1 2"></path><path d="M3 0.500H15.500V13" stroke="#dcdadc"></path>`,
  curve: svg`<path d="M6 1l2 2-2 3 2 3-1 3 1 3" stroke="#3a6890" stroke-width="1.300"></path>`,
  curveSel: svg`<path d="M6 1l-2 2 1 4-2 3 3 4M8 1l-1 4 2 3-2 3 1 4" stroke="#b8dcf4" stroke-width="1.200"></path>`,
  legend: svg`<rect x="4" y="0" width="7" height="16" fill="#111"></rect><rect x="5" y="1" width="4" height="3" fill="#f02010"></rect><rect x="5" y="4" width="4" height="3" fill="#f8e010"></rect>
    <rect x="5" y="7" width="4" height="3" fill="#20d838"></rect><rect x="5" y="10" width="4" height="2" fill="#18d0f0"></rect><rect x="5" y="12" width="4" height="3" fill="#1820e8"></rect><path d="M11 1h1.500M11 6h1.500M11 11h1.500M11 15h1.500" stroke="#111"></path>`,
  cases: svg`<path d="M1 1V9" stroke="#444"></path><path d="M2 7l5-6 2 5 3-4v4z" fill="#7890c8"></path><path d="M0 9C3 9 5 6 8 6s5 5 8 5v3C13 14 11 11 8 11S3 14 0 14Z" fill="#b06a10"></path><path d="M3 12c2-1 4-4 6-4 3 0 4 4 7 4l-3 3H5z" fill="#e8a020"></path>`,
  folder: svg`<path d="M0 1.500h6l1 2h8V15H0z" fill="#e8bc60"></path><path d="M1 4h14v11H2z" fill="#f8d488"></path>`,
  las: svg`<text x="8" y="6" font-family="DejaVu Sans" font-size="6" font-weight="bold" text-anchor="middle" fill="#333">LAS</text>
    <path d="M2 8h4v7" stroke="#777"></path><rect x="6.500" y="5.500" width="8" height="10" fill="#fff" stroke="#555"></rect><path d="M9 8c4 0 3 3 0 3 0 2 2 3 4 3" stroke="#e03818" stroke-width="1.300"></path>`,
  vfp: svg`<path d="M1 1h6l1 2h6v11H1z" fill="#f8d890"></path><path d="M3 4h11v5l-3 4H7L3 9z" fill="#f0a020"></path><path d="M3 11l5 4 5-4" stroke="#d8b0d0" stroke-width="1.500"></path>`,
};

const dotIcon = (c: string) => svg`<circle cx="8" cy="8" r="4" fill=${c}></circle>`;
const boxIcon = (c: string) => svg`<path d="M0 8h16" stroke=${c} stroke-width="1.500" opacity="0.350"></path><rect x="3.500" y="3.500" width="9" height="9" fill=${c} stroke="#333" stroke-opacity="0.700"></rect>`;

const TAB_ICONS: Record<string, SVGTemplateResult> = {
  plots: svg`<path d="M.5 0V13.500H14M3.500 3.500h2v7h-2zM7.500 5.500h2v5h-2zM11.500 1.500h2v9h-2z" stroke="#5a5658"></path>`,
  templates: svg`<path d="M2 2.500h10M7 2.500V13" stroke="#6a6668" stroke-width="2"></path>`,
  scripts: svg`<path d="M3.500 3.500L.5 7l3 3.500M10.500 3.500l3 3.500-3 3.500M8.500 2.500l-3 9" stroke="#6a6668" stroke-width="1.200"></path>`,
  editor: svg`<path d="M8 3.500H.500v7H8M2.500 6h4M2.500 8h4M9 1.500h3.500M9 12.500h3.500M10.500 2v10M12 4.500h1.500v5H12" stroke="#5a5658"></path>`,
  data: svg`<path d="M3.500 2.500v9c0 2.500 7 2.500 7 0v-9" stroke="#5a5658"></path><ellipse cx="7" cy="2.500" rx="3.500" ry="1.800" stroke="#5a5658"></ellipse>`,
  cloud: svg`<path d="M3.500 11.500c-3 0-3-4.500 0-4.500 0-4 6-4.500 7-1.200 3.500 0 3.500 5.700 0 5.700z" stroke="#3a8cb0" fill="#d8eef8" stroke-width="1.200"></path>`,
  manager: svg`<path d="M.5 1.500h5v7h-5zM7.500 7.500h6v5h-6zM3 9v3.500h4M6 4.500h3V7" stroke="#5a5658"></path>`,
  messages: svg`<path d="M13.500 4V1.500H.500v7h2v2l2-2M5.500 5.500h8v6h-1v2l-2-2h-5z" stroke="#5a5658"></path>`,
};

const CLOSE = svg`<path d="M1 1.500l7 8M8 1.500l-7 8" stroke="#1a1a1a" stroke-width="1.200"></path>`;
const CONTROLS: [string, SVGTemplateResult][] = [
  ["Options", svg`<path d="M1 4h9L5.500 8z" fill="#111"></path>`],
  ["Float", svg`<path d="M4 4V1.500h6v5H8M4 2h6" stroke="#111" stroke-width="1.400"></path><path d="M1.500 4.500h6v5h-6zM1 5h7" stroke="#111" stroke-width="1.400"></path>`],
  ["Pin", svg`<path d="M3.500 1h4v5.500M3.500 1v5.500M2 6.500h7M5.500 7v4M7 1v5" stroke="#111" stroke-width="1.300"></path>`],
  ["Close", svg`<path d="M2 1.500l7 8M9 1.500l-7 8" stroke="#222" stroke-width="1.200"></path>`],
];

/* ------------------------------------------------------------------ */
/* Tree data                                                           */
/* ------------------------------------------------------------------ */

interface Row {
  level: number;
  text: string;
  glyph: SVGTemplateResult;
  arrow?: "open" | "shut";
  check?: boolean;
  selected?: boolean;
}

const RANGES = ["[30, 43.1]", "[20, 30]", "[10, 20]", "[0, 10]", "[-10, 0]", "[-20, -10]", "[-30, -20]", "[-40, -30]", "[-50, -40]", "[-62.9, -50]"];
const RANGE_COLORS = ["#fa0000", "#fa5500", "#faa500", "#faf500", "#78f500", "#0af53c", "#00f5dc", "#00b4fa", "#0064fa", "#0000fa"];
const SWAT = ["[0.98, 1.001]", "[0.96, 0.98]", "[0.94, 0.96]", "[0.92, 0.94]", "[0.9, 0.92]", "[0.88, 0.9]", "[0.86, 0.88]", "[0.84, 0.86]"];
const DIFF = "eclipsegrid_pem--pressurediff--20180701_20180101";

const leaf = (text: string, glyph: SVGTemplateResult, arrow?: "open" | "shut"): Row => ({ level: 0, text, glyph, arrow });

const PLOT_ROWS: Row[] = [
  leaf("Summary Plots", TREE_ICONS.summary),
  leaf("Analysis Plots", TREE_ICONS.analysis),
  leaf("Ensemble Correlation Plots", TREE_ICONS.correlation),
  leaf("Summary Tables", TREE_ICONS.table),
  leaf("Well Log Plots", TREE_ICONS.well),
  leaf("RFT Plots", TREE_ICONS.rft),
  leaf("PLT Plots", TREE_ICONS.plt),
  leaf("Flow Diagnostics Plots", TREE_ICONS.plt, "shut"),
  leaf("Grid Cross Plots", TREE_ICONS.cross, "open"),
  { level: 1, text: "Cross Plot (eclipsegrid_pem, eclipsegrid_pem--airatio--20180701_20180101 x eclipsegrid_pem--vpvsratio--20180701_20180101)", glyph: TREE_ICONS.crossOne, arrow: "open", check: true },
  { level: 2, text: "Axes", glyph: TREE_ICONS.axes, arrow: "shut" },
  { level: 2, text: "eclipsegrid_pem, eclipsegrid_pem--airatio--20180701_20180101 x eclipsegrid_pem--vpvsratio--20180701_20180101", glyph: TREE_ICONS.curve, arrow: "open", check: true },
  { level: 3, text: "Color Legend", glyph: TREE_ICONS.legend, check: true },
  ...RANGES.map((r, i): Row => ({ level: 3, text: `${DIFF} ${r}`, glyph: dotIcon(RANGE_COLORS[i]), check: true })),
  ...RANGES.map((r, i): Row => ({ level: 3, text: `${DIFF} ${r} Linear Regression`, glyph: boxIcon(RANGE_COLORS[i]), check: false })),
  { level: 1, text: "Cross Plot (ECLIPSE, eclipse--ai--20180101 x eclipse--vpvs--20180101, SWAT)", glyph: TREE_ICONS.crossOne, arrow: "open", check: true },
  { level: 2, text: "Axes", glyph: TREE_ICONS.axes, arrow: "shut" },
  { level: 2, text: "ECLIPSE, eclipse--ai--20180101 x eclipse--vpvs--20180101 [SWAT]", glyph: TREE_ICONS.curveSel, arrow: "open", check: true, selected: true },
  { level: 3, text: "Color Legend", glyph: TREE_ICONS.legend, check: true },
  ...SWAT.map((r, i): Row => ({ level: 3, text: `SWAT ${r}`, glyph: dotIcon(`rgb(0,${i * 15},250)`), check: true })),
];

const SOURCE_ROWS: Row[] = [
  leaf("Summary Cases", TREE_ICONS.cases),
  leaf("Observed Data", TREE_ICONS.folder),
  leaf("Ensemble Well Logs", TREE_ICONS.las),
  leaf("VFP Data", TREE_ICONS.vfp),
];

const GRID_PATH = "hare/results/grids/eclipsegrid_pem";
const MESSAGES = [
  "hare/results/grids/eclipse--ai--20200701.roff",
  "ds/eclipsegrid_pem.roff",
  `${GRID_PATH}.roff`,
  `${GRID_PATH}--vpdiffpercent--20200701_20180101.roff`,
  `${GRID_PATH}--sidiffpercent--20200701_20180101.roff`,
  `${GRID_PATH}--pressurediff--20180701_20180101.roff`,
  `${GRID_PATH}--bulk_modulus_fluid--20190701.roff`,
  `${GRID_PATH}--aidiffpercent--20200701_20180101.roff`,
  `${GRID_PATH}--vpvsratio--20180701_20180101.roff`,
  `${GRID_PATH}--vpvsratio--20190701_20180101.roff`,
  `${GRID_PATH}--vpvsratio--20200701_20180101.roff`,
  `${GRID_PATH}--airatio--20200701_20180101.roff`,
  `${GRID_PATH}--airatio--20190701_20180101.roff`,
  `${GRID_PATH}--airatio--20180701_20180101.roff`,
  `${GRID_PATH}--sgasdiff--20180701_20180101.roff`,
  `${GRID_PATH}--sgasdiff--20190701_20180101.roff`,
  `${GRID_PATH}--sgasdiff--20200701_20180101.roff`,
  `${GRID_PATH}--pressurediff--20190701_20180101.roff`,
  `${GRID_PATH}--pressurediff--20200701_20180101.roff`,
  "hare/resinsight/DrogonSim2seisTest.rsp'",
  "ds/eclipsegrid_pem.roff",
];

interface Tab {
  label: string;
  glyph: string;
}

/* ------------------------------------------------------------------ */
/* Application shell                                                   */
/* ------------------------------------------------------------------ */

@customElement("app-root")
export class AppRoot extends LitElement {
  static styles = css`
    :host {
      display: flex;
      flex-direction: column;
      height: 100vh;
      overflow: hidden;
      background: #f0eef0;
      color: #111113;
      font: 12px/14px "DejaVu Sans", sans-serif;
    }
    * {
      box-sizing: border-box;
    }
    button {
      font: inherit;
      color: inherit;
      border: 0;
      padding: 0;
      background: none;
    }
    .icon {
      display: block;
      flex: none;
    }

    .titlebar {
      display: grid;
      grid-template-columns: 1fr auto 1fr;
      align-items: center;
      height: 36px;
      flex: none;
      padding-right: 11px;
      background: #f6f4f6;
      border-bottom: 1px solid #8e8c8e;
    }
    .wintitle {
      grid-column: 2;
      margin: 0;
      font-size: 14px;
      font-weight: normal;
      color: #2c2c2e;
    }
    .winbuttons {
      display: flex;
      justify-content: flex-end;
      gap: 22px;
    }

    .menubar {
      display: flex;
      align-items: center;
      height: 19px;
      flex: none;
      padding-left: 2px;
      border-bottom: 1px solid #dcdadc;
    }
    .menus {
      display: flex;
      flex: 1;
      gap: 15px;
      padding-left: 12px;
    }
    .menus u {
      text-underline-offset: 2px;
    }
    .mdi {
      display: flex;
      gap: 3px;
    }
    .mdi button {
      width: 18px;
      height: 18px;
      display: grid;
      place-items: center;
      border: 1px solid #b4b2b4;
      border-radius: 3px;
      background: #fafafa;
    }

    .toolbar {
      display: flex;
      align-items: center;
      gap: 12px;
      height: 38px;
      flex: none;
      padding-left: 5px;
      background: linear-gradient(#f8f6f8, #eeecee);
      border-bottom: 1px solid #b4b0b4;
    }
    .group {
      display: flex;
      align-items: center;
      gap: 9px;
    }
    .handle {
      width: 4px;
      height: 18px;
      background: radial-gradient(circle, #b0aeb0 34%, transparent 40%) 0 0 / 2px 2px;
    }

    .workspace {
      display: grid;
      grid-template-columns: minmax(0, 760fr) 4px minmax(0, 1422fr) 4px minmax(0, 481fr);
      flex: 1;
      min-height: 0;
      padding-top: 2px;
    }
    .split {
      background: #a19fa2;
    }
    .center {
      display: flex;
      min-height: 0;
      padding-bottom: 1px;
    }
    .center cross-plot {
      flex: 1;
    }
    .left {
      display: grid;
      grid-template-rows: minmax(0, 1fr) 4px auto;
      min-height: 0;
    }
    .right {
      display: grid;
      grid-template-rows: minmax(0, 911fr) 4px minmax(0, 319fr) 4px minmax(0, 328fr);
      min-height: 0;
    }
    .pane {
      display: flex;
      flex-direction: column;
      min-height: 0;
      min-width: 0;
    }

    .tabs {
      display: flex;
      height: 22px;
      flex: none;
      border-bottom: 1px solid #fff;
    }
    .tab {
      display: flex;
      align-items: center;
      padding-bottom: 1px;
      border-right: 1px solid #fff;
      color: #a3a1a4;
      white-space: nowrap;
    }
    .tab.active {
      background: #fff;
      color: #111;
    }
    .pick {
      display: flex;
      align-items: center;
      gap: 7px;
      padding: 0 8px;
      height: 100%;
    }
    .shut {
      padding: 1px 8px 0 0;
    }
    .controls {
      display: flex;
      align-items: center;
      gap: 10px;
      margin-left: auto;
      padding-right: 6px;
    }

    .body {
      display: flex;
      flex-direction: column;
      flex: 1;
      min-height: 0;
      gap: 6px;
      padding: 6px 7px 7px 6px;
    }
    .body.snug {
      padding-bottom: 2px;
    }
    .right .body {
      padding-right: 6px;
    }
    .field {
      display: block;
      width: 100%;
      min-width: 0;
      height: 22px;
      flex: none;
      padding: 0 3px;
      border: 1px solid #b0acb0;
      border-radius: 2px;
      background: #fff;
      color: #111113;
      font: inherit;
      outline: 0;
    }
    .field::placeholder {
      color: #929094;
      opacity: 1;
    }
    .path {
      background: #f3f1f3;
      padding: 0 2px 0 0;
    }

    .view {
      display: flex;
      flex: 1;
      min-height: 0;
      border: 1px solid #b4b0b4;
      background: #fff;
      overflow: hidden;
    }
    .rows {
      flex: 1;
      min-width: 0;
      overflow: hidden;
      margin: 0;
      padding: 0;
      list-style: none;
    }
    .row {
      display: flex;
      align-items: center;
      height: 18px;
      white-space: nowrap;
    }
    .row.selected {
      background: #308cc6;
      color: #e6f4fc;
    }
    .twist {
      width: 20px;
      height: 18px;
      display: grid;
      place-items: center;
      flex: none;
    }
    .entry {
      display: flex;
      align-items: center;
      min-width: 0;
      padding-left: 3px;
      padding-right: 4px;
    }
    .entry .icon {
      margin-right: 6px;
    }
    .entry .tick {
      margin-right: 7px;
    }
    .name {
      overflow: hidden;
      text-overflow: ellipsis;
      line-height: 18px;
    }
    .l0 { padding-left: 0; }
    .l1 { padding-left: 20px; }
    .l2 { padding-left: 40px; }
    .l3 { padding-left: 60px; }

    .tick {
      appearance: none;
      flex: none;
      width: 14px;
      height: 14px;
      margin: 0;
      border: 1px solid #bcb8bc;
      background: #fff;
      display: grid;
      place-items: center;
    }
    .entry .tick {
      width: 13px;
    }
    .tick:checked::before {
      content: "";
      width: 9px;
      height: 10px;
      background: #0a0a0a;
      clip-path: polygon(0 45%, 20% 40%, 42% 68%, 78% 0, 100% 2%, 55% 100%, 30% 100%);
    }

    .bar {
      display: flex;
      flex-direction: column;
      flex: none;
      width: 14px;
      border-left: 1px solid #b8b4b8;
      background: #e6e4e7;
    }
    .bar.across {
      flex-direction: row;
      width: auto;
      height: 14px;
      border-left: 0;
      border-top: 1px solid #b8b4b8;
    }
    .cap {
      display: grid;
      place-items: center;
      flex: 0 0 13px;
      background: #f9f8f9;
    }
    .bar .thumb {
      background: #f9f8fa;
      border-top: 1px solid #b8b4b8;
      border-bottom: 1px solid #b8b4b8;
    }
    .across .thumb {
      border: 0;
      border-left: 1px solid #b8b4b8;
      border-right: 1px solid #b8b4b8;
    }
    .bar .cap.end {
      border-top: 1px solid #b8b4b8;
    }
    .across .cap.end {
      border-top: 0;
      border-left: 1px solid #b8b4b8;
    }
    .grow {
      flex-basis: 0;
    }

    .form {
      display: grid;
      grid-template-columns: minmax(0, 371fr) minmax(0, 370fr);
      align-items: center;
      gap: 6px;
    }
    .combo {
      position: relative;
      display: block;
      min-width: 0;
    }
    .combo select {
      appearance: none;
      width: 100%;
      height: 22px;
      display: block;
      padding: 0 20px 0 4px;
      border: 1px solid #b0acb0;
      border-radius: 3px;
      background: linear-gradient(#fdfdfd, #efedef);
      color: #111113;
      font: inherit;
    }
    .combo.pictured select {
      padding-left: 22px;
    }
    .combo .down {
      position: absolute;
      right: 7px;
      top: 8px;
      pointer-events: none;
    }
    .combo .lead {
      position: absolute;
      left: 5px;
      top: 4px;
      pointer-events: none;
    }

    .box {
      display: flex;
      flex-direction: column;
      min-width: 0;
      border: 1px solid #b8b4b8;
      background: #f4f1f4;
    }
    .boxhead {
      display: flex;
      align-items: center;
      justify-content: space-between;
      height: 21px;
      padding: 0 4px;
      background: linear-gradient(#e2e0e2, #c0bec0);
      border-bottom: 1px solid #aaa8aa;
    }
    .boxhead h2 {
      margin: 0;
      font: inherit;
    }
    .grid2 {
      display: grid;
      grid-template-columns: 122px minmax(0, 1fr);
      align-items: center;
      gap: 6px;
      padding: 6px;
    }
    .stacked {
      display: flex;
      flex-direction: column;
      gap: 6px;
      padding: 6px;
    }
    .stacked .caption {
      line-height: 14px;
    }
    .list {
      height: 70px;
      grid-column: 2;
      flex: none;
    }
    .stacked .list {
      height: 82px;
    }
    .options {
      flex: 1;
      min-width: 0;
      overflow: hidden;
      margin: 0;
      padding: 0 0 0 4px;
      border: 0;
    }
    .option {
      display: flex;
      align-items: center;
      gap: 7px;
      height: 14px;
      white-space: nowrap;
    }
    .option input {
      appearance: none;
      flex: none;
      width: 12px;
      height: 12px;
      margin: 0;
      border: 1px solid #8f8d8f;
      border-radius: 50%;
      background: #fff;
      display: grid;
      place-items: center;
    }
    .option input:checked::before {
      content: "";
      width: 8px;
      height: 8px;
      border-radius: 50%;
      background: #8f8d8f;
    }
    .filename {
      display: grid;
      grid-template-columns: 62px minmax(0, 1fr);
      align-items: center;
      gap: 6px;
      color: #c0bcc0;
      white-space: nowrap;
    }
    .flags {
      display: grid;
      grid-template-columns: minmax(0, 370fr) minmax(0, 363fr);
      align-items: center;
      row-gap: 7px;
      padding: 6px 6px 7px;
    }

    .log {
      display: flex;
      flex-direction: column;
      flex: 1;
      min-height: 0;
      margin: 3px 3px 4px;
      border: 1px solid #b4b0b4;
      background: #fff;
    }
    .logtop {
      display: flex;
      flex: 1;
      min-height: 0;
    }
    .lines {
      flex: 1;
      min-width: 0;
      margin: 0;
      overflow: hidden;
      white-space: pre;
      font: inherit;
      color: #29282b;
    }
    .logfoot {
      display: grid;
      grid-template-columns: minmax(0, 1fr) 14px;
      background: #f0eef0;
    }
    .logfoot .bar {
      border-right: 1px solid #b8b4b8;
    }
  `;

  firstUpdated() {
    this.renderRoot.querySelectorAll<HTMLInputElement>(".path").forEach((el) => {
      el.scrollLeft = el.scrollWidth;
    });
  }

  private tri(dir: "up" | "down" | "left" | "right"): TemplateResult {
    const d = { up: "M0 5.500L4 1l4 4.500z", down: "M0 2l4 4.500L8 2z", left: "M5.500 0L1 4l4.500 4z", right: "M2.500 0L7 4 2.500 8z" }[dir];
    return icon(8, svg`<path d=${d} fill="#5c5a5c"></path>`);
  }

  private bar(before: number, thumb: number, after: number, across = false): TemplateResult {
    return html`<div class="bar ${across ? "across" : ""}">
      <span class="cap">${this.tri(across ? "left" : "up")}</span>
      <span class="grow" style="flex-grow:${before}"></span>
      <span class="grow thumb" style="flex-grow:${thumb}"></span>
      <span class="grow" style="flex-grow:${after}"></span>
      <span class="cap end">${this.tri(across ? "right" : "down")}</span>
    </div>`;
  }

  private tabs(list: Tab[]): TemplateResult {
    return html`<div class="tabs">
      ${list.map((t, i) => html`<div class="tab ${i === 0 ? "active" : ""}">
        <button class="pick">${icon(14, TAB_ICONS[t.glyph])}${t.label}</button>
        ${i === 0 ? html`<button class="shut" aria-label="Close ${t.label}">${icon(10, CLOSE)}</button>` : nothing}
      </div>`)}
      <div class="controls">${CONTROLS.map(([n, g]) => html`<button aria-label=${n}>${icon(11, g)}</button>`)}</div>
    </div>`;
  }

  private tree(rows: Row[]): TemplateResult {
    return html`<ul class="rows">
      ${rows.map((r) => html`<li class="row l${r.level} ${r.selected ? "selected" : ""}">
        ${r.arrow
          ? html`<button class="twist" aria-label="Toggle">${r.arrow === "open" ? this.tri("down") : this.tri("right")}</button>`
          : html`<span class="twist"></span>`}
        <label class="entry">
          ${r.check === undefined ? nothing : html`<input class="tick" type="checkbox" .checked=${r.check} />`}
          ${icon(16, r.glyph)}<span class="name">${r.text}</span>
        </label>
      </li>`)}
    </ul>`;
  }

  private combo(id: string, value: string, pictured = false): TemplateResult {
    return html`<span class="combo ${pictured ? "pictured" : ""}">
      <select id=${id}><option>${value}</option></select>
      ${pictured
        ? html`<span class="lead">${icon(15, svg`<path d="M0 7C4 7 5 4 8 4S12 8 15 8V14C12 14 11 10 8 10S4 14 0 14Z" fill="#c8780e"></path>
            <path d="M0 7C4 7 5 4 8 4S12 8 15 8V10C12 10 11 7 8 7S4 10 0 10Z" fill="#e8a030"></path><path d="M0 12c4 0 5-3.500 8-3.500S12 12 15 12" stroke="#8a5008"></path>`)}</span>`
        : nothing}
      <span class="down">${this.tri("down")}</span>
    </span>`;
  }

  private head(title: string): TemplateResult {
    return html`<div class="boxhead"><h2>${title}</h2>
      <button aria-label="Collapse ${title}">${icon(10, svg`<path d="M2 4.500L5 1l3 3.500M2 9.500L5 6l3 3.500" stroke="#4a484a" stroke-width="1.200"></path>`)}</button></div>`;
  }

  private radios(name: string, items: string[], picked: string, scroll: [number, number, number]): TemplateResult {
    return html`<div class="view list">
      <fieldset class="options" aria-label=${name}>
        ${items.map((t) => html`<label class="option"><input type="radio" name=${name} .checked=${t === picked} />${t}</label>`)}
      </fieldset>
      ${this.bar(...scroll)}
    </div>`;
  }

  private axisBox(axis: string, items: string[], picked: string, scroll: [number, number, number], file: string): TemplateResult {
    return html`<section class="box">
      ${this.head(`${axis}-Axis Property`)}
      <div class="stacked">
        <label class="caption" for="type-${axis}">Type</label>
        ${this.combo(`type-${axis}`, "Input Property")}
        <label class="caption" for="filter-${axis}">Result Property</label>
        <input class="field" id="filter-${axis}" placeholder="Type to filter items" />
        ${this.radios(`result-${axis}`, items, picked, scroll)}
        <div class="filename">
          <label for="file-${axis}">File Name</label>
          <input class="field path" id="file-${axis}" readonly .value=${file} />
        </div>
      </div>
    </section>`;
  }

  render() {
    const menus = ["File", "Edit", "View", "Windows", "Help"];
    const flags = ["Add Case Name", "Add Axis Variables", "Add Time Step", "Add Data Group"];
    const combos: [string, string][] = [
      ["Case", "ECLIPSE"],
      ["Time Step", "All Time Steps"],
      ["Filter by 3d View Visibility", "Disabled"],
      ["Group Data by", "Result Property"],
    ];
    return html`
      <header class="titlebar">
        <h1 class="wintitle">DrogonSim2seisTest.rsp - ResInsight - [Cross Plot (ECLIPSE, eclipse--ai--20180101 x eclipse--vpvs--20180101, SWAT)]</h1>
        <div class="winbuttons">
          <button aria-label="Minimize">${icon(12, svg`<path d="M2 10h8" stroke="#222" stroke-width="2"></path>`)}</button>
          <button aria-label="Maximize">${icon(12, svg`<rect x="3" y="3" width="6" height="6" stroke="#222" stroke-width="2"></rect>`)}</button>
          <button aria-label="Close">${icon(12, svg`<path d="M2.500 2.500l7 7M9.500 2.500l-7 7" stroke="#222" stroke-width="2"></path>`)}</button>
        </div>
      </header>

      <nav class="menubar">
        ${icon(12, svg`<rect width="12" height="12" fill="#3c5c60"></rect><path d="M1 2c5 1 7 5 10 9H1z" fill="#d8b868"></path><path d="M1 7l6 4H1z" fill="#70a878"></path>`)}
        <div class="menus">${menus.map((m) => html`<button><u>${m[0]}</u>${m.slice(1)}</button>`)}</div>
        <div class="mdi">
          <button aria-label="Restore window">${icon(12, svg`<rect x="1" y="1" width="10" height="10" rx="2" stroke="#555"></rect><path d="M3.500 5.500h3v3h-3zM5.500 5V3.500h3v3H7" stroke="#555"></path>`)}</button>
          <button aria-label="Close window">${icon(12, svg`<rect x="1" y="1" width="10" height="10" rx="2" stroke="#555"></rect><path d="M3.500 3.500l5 5M8.500 3.500l-5 5" stroke="#555" stroke-width="1.500"></path>`)}</button>
        </div>
      </nav>

      <div class="toolbar">
        ${TOOL_GROUPS.map((g) => html`<div class="group"><span class="handle"></span>${g.map((n) => html`<button aria-label=${n}>${icon(24, TOOLS[n])}</button>`)}</div>`)}
      </div>

      <main class="workspace">
        <div class="left">
          <section class="pane">
            ${this.tabs([{ label: "Plots", glyph: "plots" }, { label: "Templates", glyph: "templates" }, { label: "Scripts", glyph: "scripts" }])}
            <div class="body">
              <input class="field" aria-label="Search plots" placeholder="Type here to search in tree." />
              <div class="view">${this.tree(PLOT_ROWS)}${this.bar(0, 238, 536)}</div>
            </div>
          </section>
          <div class="split"></div>
          <section class="pane">
            ${this.tabs([{ label: "Property Editor", glyph: "editor" }])}
            <div class="body snug">
              <div class="form">
                ${combos.map(([label, value], i) => html`<label for="combo-${i}">${label}</label>${this.combo(`combo-${i}`, value, i === 0)}`)}
              </div>
              <section class="box">
                ${this.head("Data Grouping Property")}
                <div class="grid2">
                  <label for="group-type">Type</label>${this.combo("group-type", "Dynamic")}
                  <label for="group-filter">Result Property</label>
                  <input class="field" id="group-filter" placeholder="Type to filter items" />
                  ${this.radios("group-result", ["SGAS", "SOIL", "SOMAX", "SWAT", "WATKR"], "SWAT", [12, 27, 1])}
                  <label for="intervals">Number of Intervals</label>
                  <input class="field" id="intervals" .value=${"64"} />
                </div>
              </section>
              <div class="form">
                ${this.axisBox("X", ["None", "eclipse--ai--20180101", "eclipse--ai--20180701", "eclipse--ai--20190701", "eclipse--ai--20200701", "eclipse--dens--20180101"],
                  "eclipse--ai--20180101", [0, 27, 26], "dev/share/results/grids/eclipse--ai--20180101.roff")}
                ${this.axisBox("Y", ["eclipse--vp--20180101", "eclipse--vp--20180701", "eclipse--vp--20190701", "eclipse--vp--20200701", "eclipse--vpvs--20180101", "eclipse--vpvs--20180701"],
                  "eclipse--vpvs--20180101", [14, 27, 12], "dev/share/results/grids/eclipse--vpvs--20180101.roff")}
              </div>
              <section class="box">
                ${this.head("Name Configuration")}
                <div class="flags">
                  ${flags.map((f, i) => html`<label for="flag-${i}">${f}</label><input class="tick" type="checkbox" id="flag-${i}" checked />`)}
                </div>
              </section>
            </div>
          </section>
        </div>
        <div class="split"></div>
        <div class="center"><cross-plot></cross-plot></div>
        <div class="split"></div>
        <div class="right">
          <section class="pane">
            ${this.tabs([{ label: "Data Sources", glyph: "data" }, { label: "Cloud [BETA]", glyph: "cloud" }, { label: "Plot Manager", glyph: "manager" }])}
            <div class="body">
              <input class="field" aria-label="Search data sources" placeholder="Type here to search in tree." />
              <div class="view">${this.tree(SOURCE_ROWS)}</div>
            </div>
          </section>
          <div class="split"></div>
          <section class="pane">${this.tabs([{ label: "Data Source Property Editor", glyph: "editor" }])}</section>
          <div class="split"></div>
          <section class="pane">
            ${this.tabs([{ label: "Messages", glyph: "messages" }])}
            <div class="log">
              <div class="logtop">
                <pre class="lines">${MESSAGES.join("\n")}</pre>
                ${this.bar(16, 51, 190)}
              </div>
              <div class="logfoot">${this.bar(229, 198, 6, true)}</div>
            </div>
          </section>
        </div>
      </main>
    `;
  }
}
